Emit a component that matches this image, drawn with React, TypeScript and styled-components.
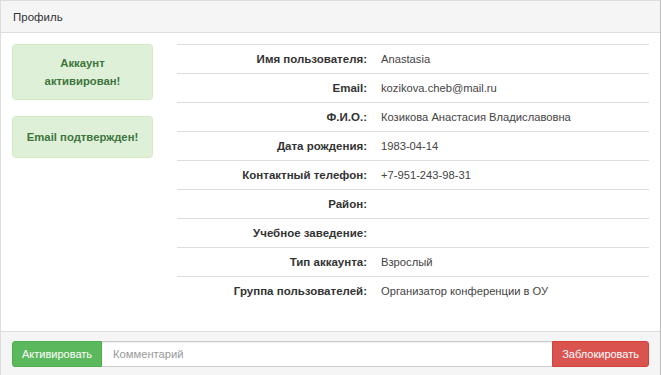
import React from "react";
import styled, { createGlobalStyle } from "styled-components";

const Global = createGlobalStyle`
  html, body { margin: 0; padding: 0; background: #fff; }
  body { font-family: "Liberation Sans", Arial, sans-serif; color: #333; }
  * { box-sizing: border-box; }
`;

const Panel = styled.div`
  width: 661px;
  height: 375px;
  border: 1px solid #ddd;
  border-bottom: none;
  border-right-color: #bbb;
  display: flex;
  flex-direction: column;
  background: #fff;
`;

const Heading = styled.div`
  height: 32px;
  background: #f5f5f5;
  border-bottom: 1px solid #ddd;
  padding: 0 12px;
  display: flex;
  align-items: center;
  font-size: 11.5px;
  color: #333;
`;

const Body = styled.div`
  flex: 1;
  display: flex;
  padding: 11px 11px 0 11px;
  gap: 24px;
`;

const Side = styled.div`
  width: 141px;
  display: flex;
  flex-direction: column;
  gap: 16px;
`;

const Alert = styled.div<{ $tall?: boolean }>`
  background: #dff0d8;
  border: 1px solid #d6e9c6;
  border-radius: 4px;
  color: #3c763d;
  font-weight: bold;
  font-size: 11.3px;
  line-height: 18px;
  text-align: center;
  padding: ${(p) => (p.$tall ? "9px 8px" : "11px 8px")};
`;

const Table = styled.div`
  flex: 1;
  display: grid;
  grid-template-columns: 195px 1fr;
  grid-auto-rows: 29px;
  align-content: start;
`;

const Cell = styled.div<{ $label?: boolean }>`
  display: flex;
  align-items: center;
  border-top: 1px solid #ddd;
  justify-content: ${(p) => (p.$label ? "flex-end" : "flex-start")};
  font-weight: ${(p) => (p.$label ? "bold" : "normal")};
  font-size: ${(p) => (p.$label ? "11.5px" : "11.2px")};
  color: ${(p) => (p.$label ? "#333" : "#444")};
  padding: ${(p) => (p.$label ? "0 5px 0 0" : "0 0 0 9px")};
`;

const Footer = styled.div`
  height: 44px;
  background: #f5f5f5;
  border-top: 1px solid #ddd;
  padding: 9px 11px 0 11px;
  display: flex;
  align-items: flex-start;
`;

const Btn = styled.button<{ $variant: "success" | "danger" }>`
  height: 26px;
  font-family: "Liberation Sans", Arial, sans-serif;
  font-size: 11px;
  color: #fff;
  padding: 0 9px;
  border: 1px solid ${(p) => (p.$variant === "success" ? "#4cae4c" : "#d43f3a")};
  background: ${(p) => (p.$variant === "success" ? "#5cb85c" : "#d9534f")};
  border-radius: ${(p) => (p.$variant === "success" ? "3px 0 0 3px" : "0 3px 3px 0")};
`;

const Input = styled.input`
  flex: 1;
  height: 26px;
  border: 1px solid #ccc;
  border-left: none;
  border-right: none;
  padding: 0 11px;
  font-family: "Liberation Sans", Arial, sans-serif;
  font-size: 11.2px;
  color: #555;
  outline: none;
  box-shadow: inset 0 1px 1px rgba(0,0,0,0.075);
  &::placeholder { color: #999; }
`;

const rows: [string, string][] = [
  ["Имя пользователя:", "Anastasia"],
  ["Email:", "kozikova.cheb@mail.ru"],
  ["Ф.И.О.:", "Козикова Анастасия Владиславовна"],
  ["Дата рождения:", "1983-04-14"],
  ["Контактный телефон:", "+7-951-243-98-31"],
  ["Район:", ""],
  ["Учебное заведение:", ""],
  ["Тип аккаунта:", "Взрослый"],
  ["Группа пользователей:", "Организатор конференции в ОУ"],
];

export default function App() {
  return (
    <>
      <Global />
      <Panel>
        <Heading>Профиль</Heading>
        <Body>
          <Side>
            <Alert $tall>
              Аккаунт
              <br />
              активирован!
            </Alert>
            <Alert>Email подтвержден!</Alert>
          </Side>
          <Table>
            {rows.map(([l, v]) => (
              <React.Fragment key={l}>
                <Cell $label>{l}</Cell>
                <Cell>{v}</Cell>
              </React.Fragment>
            ))}
          </Table>
        </Body>
        <Footer>
          <Btn $variant="success">Активировать</Btn>
          <Input placeholder="Комментарий" />
          <Btn $variant="danger">Заблокировать</Btn>
        </Footer>
      </Panel>
    </>
  );
}
